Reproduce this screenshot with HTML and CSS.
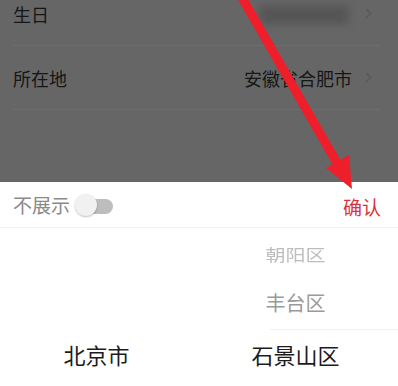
FILE: index.html
```html
<!DOCTYPE html>
<html lang="zh">
<head>
<meta charset="utf-8">
<link rel="stylesheet" href="styles.css">
</head>
<body>
<div class="page">
  <div class="rows">
    <div class="row">
      <span class="label">生日</span>
      <span class="value"><span class="blurred"></span><span class="chev"></span></span>
    </div>
    <div class="row">
      <span class="label">所在地</span>
      <span class="value"><span class="text">安徽省合肥市</span><span class="chev"></span></span>
    </div>
  </div>
  <div class="sheet">
    <div class="toolbar">
      <div class="left">
        <span class="hide-label">不展示</span>
        <span class="toggle"><span class="track"></span><span class="knob"></span></span>
      </div>
      <span class="confirm">确认</span>
    </div>
    <div class="picker">
      <div class="col col-left">
        <div class="item far"></div>
        <div class="item near"></div>
        <div class="item selected">北京市</div>
      </div>
      <div class="col col-right">
        <div class="item far"><span class="squish">朝阳区</span></div>
        <div class="item near">丰台区</div>
        <div class="item selected sel-line">石景山区</div>
      </div>
    </div>
  </div>
  <svg class="arrow" width="398" height="386" viewBox="0 0 398 386">
    <line x1="241" y1="-4" x2="337" y2="163" stroke="#ee1f2b" stroke-width="9"/>
    <polygon points="326,168 352,189 349,155" fill="#ee1f2b"/>
  </svg>
</div>
</body>
</html>
```
FILE: styles.css
```css
html, body {
  margin: 0;
  padding: 0;
}
body {
  background: #666666;
  font-family: "Noto Sans CJK SC", "Noto Sans", sans-serif;
}
.page {
  position: relative;
  width: 398px;
  height: 386px;
  overflow: hidden;
}
.rows {
  margin-top: -18px;
  height: 200px;
}
.row {
  height: 63px;
  margin: 0 18px 0 13px;
  border-bottom: 1px solid #6d6d6d;
  display: flex;
  align-items: center;
  justify-content: space-between;
}
.label {
  font-size: 18px;
  color: #161616;
}
.value {
  display: flex;
  align-items: center;
  padding-right: 10px;
}
.text {
  font-size: 18px;
  color: #161616;
}
.blurred {
  display: block;
  width: 90px;
  height: 18px;
  margin-top: 2px;
  margin-right: 3px;
  background: #555555;
  filter: blur(4px);
  border-radius: 4px;
}
.chev {
  display: block;
  width: 6px;
  height: 6px;
  border-top: 1px solid #555;
  border-right: 1px solid #555;
  transform: rotate(45deg);
  margin-left: 11px;
}
.sheet {
  position: absolute;
  left: 0;
  top: 182px;
  width: 398px;
  height: 204px;
  background: #ffffff;
}
.toolbar {
  height: 45px;
  padding: 0 17px 0 13px;
  border-bottom: 1px solid #f0f0f0;
  display: flex;
  align-items: center;
  justify-content: space-between;
}
.left {
  display: flex;
  align-items: center;
}
.hide-label {
  font-size: 19px;
  color: #8a8a8a;
}
.toggle {
  position: relative;
  width: 40px;
  height: 24px;
  margin-left: 5px;
  margin-top: 2px;
}
.track {
  position: absolute;
  left: 12px;
  top: 5px;
  width: 26px;
  height: 15px;
  border-radius: 8px;
  background: #bdbdbd;
}
.knob {
  position: absolute;
  left: 0;
  top: 0;
  width: 22px;
  height: 22px;
  border-radius: 50%;
  background: #f1f1f1;
  box-shadow: 0 1px 2px rgba(0,0,0,0.25);
}
.confirm {
  font-size: 19px;
  color: #d8333b;
  margin-top: 3px;
}
.picker {
  display: grid;
  grid-template-columns: 193px 205px;
}
.col {
  display: flex;
  flex-direction: column;
}
.item {
  display: flex;
  align-items: center;
  justify-content: center;
  white-space: nowrap;
}
.far {
  height: 52px;
  font-size: 20px;
  color: #bdbdbd;
}
.squish {
  display: inline-block;
  transform: scaleY(0.82);
}
.near {
  height: 44px;
  padding-bottom: 5px;
  font-size: 20px;
  color: #9a9a9a;
}
.selected {
  height: 49px;
  padding-bottom: 4px;
  font-size: 22px;
  color: #1c1c1c;
}
.sel-line {
  position: relative;
}
.sel-line::before {
  content: "";
  position: absolute;
  left: 77px;
  right: 0;
  top: 0;
  height: 1px;
  background: #f0f0f0;
}
.arrow {
  position: absolute;
  left: 0;
  top: 0;
  pointer-events: none;
}
```
